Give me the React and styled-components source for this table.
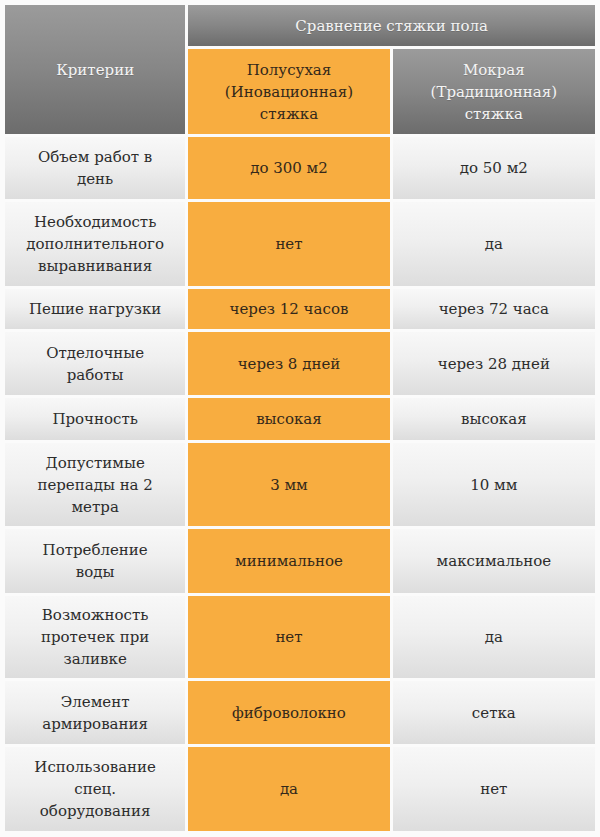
import React from "react"
import styled, { createGlobalStyle } from "styled-components"

const GlobalStyle = createGlobalStyle`
	html, body {
		margin: 0;
		padding: 0;
		background: #fbfbfb;
	}
	body {
		padding: 2px;
		font-family: "DejaVu Serif", "Liberation Serif", serif;
	}
`

const Table = styled.table`
	width: 596px;
	border-collapse: separate;
	border-spacing: 3px;
	table-layout: fixed;
	font-family: "DejaVu Serif", "Liberation Serif", serif;
	font-size: 15px;
	line-height: 22px;
	color: #2c2c2c;
`

const HeadCell = styled.th`
	height: ${(p) => p.$h}px;
	padding: 0 16px;
	font-weight: normal;
	text-align: center;
	vertical-align: middle;
	color: ${(p) => (p.$orange ? "#33281a" : "#f4f4f4")};
	background: ${(p) =>
		p.$orange
			? "#f8ad40"
			: "linear-gradient(to bottom, #9b9b9b 0%, #868686 50%, #6c6c6c 100%)"};
	text-shadow: ${(p) => (p.$orange ? "none" : "0 1px 0 rgba(0,0,0,0.15)")};
`

const Cell = styled.td`
	height: ${(p) => p.$h}px;
	padding: 0 16px;
	text-align: center;
	vertical-align: middle;
	background: ${(p) =>
		p.$orange
			? "#f8ad40"
			: "linear-gradient(to bottom, #f8f8f8 0%, #efefef 45%, #dddddd 100%)"};
	color: ${(p) => (p.$orange ? "#33281a" : "#2c2c2c")};
`

const rows = [
	{ h: 62, name: "Объем работ в день", dry: "до 300 м2", wet: "до 50 м2" },
	{ h: 84, name: "Необходимость дополнительного выравнивания", dry: "нет", wet: "да" },
	{ h: 40, name: "Пешие нагрузки", dry: "через 12 часов", wet: "через 72 часа" },
	{ h: 63, name: "Отделочные работы", dry: "через 8 дней", wet: "через 28 дней" },
	{ h: 42, name: "Прочность", dry: "высокая", wet: "высокая" },
	{ h: 83, name: "Допустимые перепады на 2 метра", dry: "3 мм", wet: "10 мм" },
	{ h: 64, name: "Потребление воды", dry: "минимальное", wet: "максимальное" },
	{ h: 82, name: "Возможность протечек при заливке", dry: "нет", wet: "да" },
	{ h: 63, name: "Элемент армирования", dry: "фиброволокно", wet: "сетка" },
	{ h: 84, name: "Использование спец. оборудования", dry: "да", wet: "нет" },
]

const App = () => {
	return (
		<>
			<GlobalStyle />
			<Table>
				<colgroup>
					<col style={{ width: 180 }} />
					<col style={{ width: 201 }} />
					<col style={{ width: 202 }} />
				</colgroup>
				<thead>
					<tr>
						<HeadCell rowSpan={2} $h={41}>
							Критерии
						</HeadCell>
						<HeadCell colSpan={2} $h={41}>
							Сравнение стяжки пола
						</HeadCell>
					</tr>
					<tr>
						<HeadCell $orange $h={85}>
							Полусухая (Иновационная) стяжка
						</HeadCell>
						<HeadCell $h={85}>Мокрая (Традиционная) стяжка</HeadCell>
					</tr>
				</thead>
				<tbody>
					{rows.map((r) => (
						<tr key={r.name}>
							<Cell $h={r.h}>{r.name}</Cell>
							<Cell $orange $h={r.h}>
								{r.dry}
							</Cell>
							<Cell $h={r.h}>{r.wet}</Cell>
						</tr>
					))}
				</tbody>
			</Table>
		</>
	)
}

export default App
